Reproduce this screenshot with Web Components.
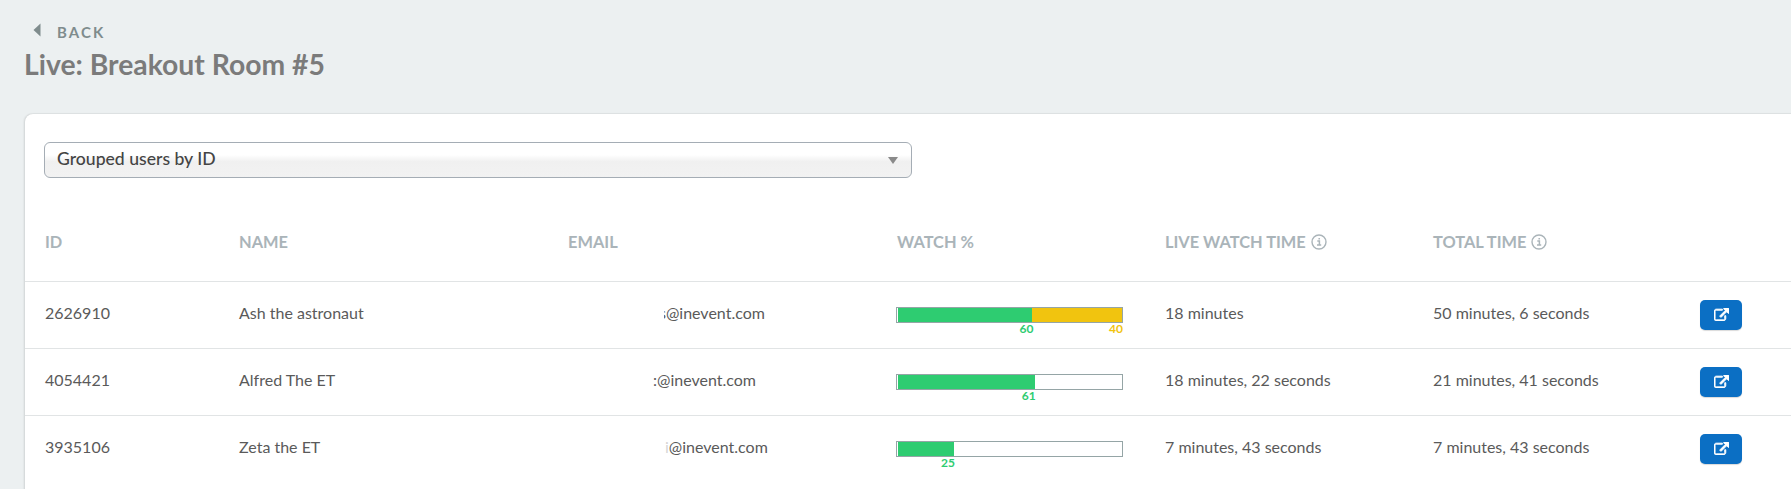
<!DOCTYPE html>
<html>
<head>
<meta charset="utf-8">
<title>Live: Breakout Room #5</title>
<style>
  html, body { margin: 0; height: 100%; overflow: hidden; }
  body { background: #ecf0f1; font-family: Lato, sans-serif; }
</style>
</head>
<body>
<report-page>
  <page-header slot="header" title="Live: Breakout Room #5"></page-header>
  <report-card>
    <group-select label="Grouped users by ID"></group-select>
    <watch-table>
      <watch-row uid="2626910" name="Ash the astronaut" first="s" domain="@inevent.com" mail-x="91" veil="5px" veil-color="#fff" live="18 minutes" total="50 minutes, 6 seconds" green="60" yellow="40"></watch-row>
      <watch-row uid="4054421" name="Alfred The ET" first=":" domain="@inevent.com" mail-x="85" veil="0" veil-color="#fff" live="18 minutes, 22 seconds" total="21 minutes, 41 seconds" green="61"></watch-row>
      <watch-row uid="3935106" name="Zeta the ET" first="i" domain="@inevent.com" mail-x="97" veil="100%" veil-color="rgba(255,255,255,.75)" live="7 minutes, 43 seconds" total="7 minutes, 43 seconds" green="25"></watch-row>
    </watch-table>
  </report-card>
</report-page>

<script>
class ReportPage extends HTMLElement {
  constructor() {
    super();
    this._shadowRoot = this.attachShadow({ mode: "open" });
    this._shadowRoot.innerHTML = `
      <style>
        :host { display: block; padding: 0 0 0 25px; }
      </style>
      <slot name="header"></slot>
      <slot></slot>
    `;
  }
}

class PageHeader extends HTMLElement {
  constructor() {
    super();
    this._shadowRoot = this.attachShadow({ mode: "open" });
  }
  connectedCallback() {
    this._shadowRoot.innerHTML = `
      <style>
        :host { display: block; padding-top: 22px; height: 92px; }
        .back {
          display: flex; align-items: center; gap: 16px; padding-left: 8px; height: 20px;
          color: #7f8c8d; font-size: 15px; font-weight: 700; letter-spacing: 2.1px;
        }
        svg { display: block; margin-top: -5px; }
        h1 { margin: 6px 0 0 -1px; color: #7b7b7b; font-size: 28.3px; line-height: 32px; font-weight: 700; }
      </style>
      <div class="back">
        <svg width="8" height="14" viewBox="0 0 8 14"><path d="M7.5 0.5v13L0.5 7z" fill="#7f8c8d"/></svg>
        <span>BACK</span>
      </div>
      <h1>${this.getAttribute("title")}</h1>
    `;
  }
}

class ReportCard extends HTMLElement {
  constructor() {
    super();
    this._shadowRoot = this.attachShadow({ mode: "open" });
    this._shadowRoot.innerHTML = `
      <style>
        :host {
          display: block; background: #fff; height: 500px;
          margin-right: -20px; padding-top: 28px;
          border-radius: 8px 0 0 0;
          box-shadow: -1px 0 2px rgba(0,0,0,.12), 0 -1px 1px rgba(0,0,0,.03);
        }
      </style>
      <slot></slot>
    `;
  }
}

class GroupSelect extends HTMLElement {
  constructor() {
    super();
    this._shadowRoot = this.attachShadow({ mode: "open" });
  }
  connectedCallback() {
    this._shadowRoot.innerHTML = `
      <style>
        :host {
          display: flex; align-items: center; justify-content: space-between;
          box-sizing: border-box; width: 868px; height: 36px; margin-left: 19px;
          padding: 0 12px 3px;
          border: 1px solid #a5adb5; border-radius: 6px;
          background: linear-gradient(#fff 0, #fff 35%, #f0f0f0 55%, #f2f2f2 100%);
          color: #444; font-size: 17.6px; font-weight: 500;
        }
        i { width: 0; height: 0; border: 5px solid transparent; border-top: 7px solid #8a8a8a; border-bottom: 0; margin: 3px 1px 0 0; }
      </style>
      <span>${this.getAttribute("label")}</span><i></i>
    `;
  }
}

const COLS = "194px 329px 329px 268px 268px 267px 60px";

class WatchTable extends HTMLElement {
  constructor() {
    super();
    this._shadowRoot = this.attachShadow({ mode: "open" });
    const info = `<svg width="16" height="16" viewBox="0 0 16 16" fill="none"><circle cx="8" cy="8" r="7" stroke="#aab4b9" stroke-width="1.4"/><path d="M6.3 6.9h2.1v3.9M6 11h4.2M8.2 3.9v1.6" stroke="#aab4b9" stroke-width="1.5"/></svg>`;
    this._shadowRoot.innerHTML = `
      <style>
        :host { display: block; margin-top: 36px; }
        .head {
          display: grid; grid-template-columns: ${COLS}; align-items: center;
          padding-left: 20px; height: 55px; padding-bottom: 12px;
          color: #aab4b9; font-size: 16.4px; font-weight: 700;
        }
        .head span { display: flex; align-items: center; gap: 5px; }
      </style>
      <div class="head">
        <span>ID</span><span>NAME</span><span>EMAIL</span><span>WATCH %</span>
        <span>LIVE WATCH TIME ${info}</span>
        <span>TOTAL TIME ${info}</span>
      </div>
      <slot></slot>
    `;
  }
}

class WatchBar extends HTMLElement {
  constructor() {
    super();
    this._shadowRoot = this.attachShadow({ mode: "open" });
  }
  connectedCallback() {
    const green = +this.getAttribute("green");
    const yellow = +this.getAttribute("yellow") || 0;
    const seg = (n, cls) => n ? `<div class="seg ${cls}" style="width:${n}%"><b>${n}</b></div>` : "";
    this._shadowRoot.innerHTML = `
      <style>
        :host { display: block; width: 227px; }
        .track {
          display: flex; box-sizing: border-box; height: 16px;
          border: 1px solid #95a5a6; background: #fff;
          padding-left: 1px;
        }
        .seg { position: relative; height: 100%; }
        .green { background: #2ecc71; color: #2ecc71; }
        .yellow { background: #f1c40f; color: #f1c40f; }
        b { position: absolute; right: -1px; top: 14px; font-size: 12px; line-height: 14px; font-weight: 700; }
      </style>
      <div class="track">${seg(green, "green")}${seg(yellow, "yellow")}</div>
    `;
  }
}

class OpenButton extends HTMLElement {
  constructor() {
    super();
    this._shadowRoot = this.attachShadow({ mode: "open" });
    this._shadowRoot.innerHTML = `
      <style>
        :host {
          display: flex; align-items: center; justify-content: center;
          width: 42px; height: 30px; border-radius: 5px;
          background: #0b6fc4; box-shadow: 0 1px 1px rgba(0,0,0,.15);
        }
      </style>
      <svg width="15" height="13" viewBox="0 0 1792 1536">
        <path fill="#fff" stroke="#fff" stroke-width="110" d="M1408 928v320q0 119-84.5 203.5T1120 1536H288q-119 0-203.5-84.5T0 1248V416q0-119 84.5-203.5T288 128h704q14 0 23 9t9 23v64q0 14-9 23t-23 9H288q-66 0-113 47t-47 113v832q0 66 47 113t113 47h832q66 0 113-47t47-113V928q0-14 9-23t23-9h64q14 0 23 9t9 23zm384-864v512q0 26-19 45t-45 19-45-19l-176-176-652 652q-10 10-23 10t-23-10L695 983q-10-10-10-23t10-23l652-652-176-176q-19-19-19-45t19-45 45-19h512q26 0 45 19t19 45z"/>
      </svg>
    `;
  }
}

class WatchRow extends HTMLElement {
  constructor() {
    super();
    this._shadowRoot = this.attachShadow({ mode: "open" });
  }
  connectedCallback() {
    const attr = (n) => this.getAttribute(n);
    const yellow = attr("yellow") ? `yellow="${attr("yellow")}"` : "";
    this._shadowRoot.innerHTML = `
      <style>
        :host {
          display: grid; grid-template-columns: ${COLS}; align-items: center;
          box-sizing: border-box; height: 67px; padding: 0 0 6px 20px;
          border-top: 1px solid #e1e4e5;
          color: #5a5a5a; font-size: 16px;
        }
        .mail { padding-left: ${attr("mail-x")}px; }
        .first { position: relative; }
        /* the start of the address is blurred out in the original */
        .first::before {
          content: ""; position: absolute; left: 0; top: 0; bottom: 0;
          width: ${attr("veil")}; background: ${attr("veil-color")};
        }
        watch-bar { margin: 5px 0 0 -1px; }
        open-button { margin-top: 5px; }
      </style>
      <span>${attr("uid")}</span>
      <span>${attr("name")}</span>
      <span class="mail"><span class="first">${attr("first")}</span>${attr("domain")}</span>
      <watch-bar green="${attr("green")}" ${yellow}></watch-bar>
      <span>${attr("live")}</span>
      <span>${attr("total")}</span>
      <open-button></open-button>
    `;
  }
}

customElements.define("report-page", ReportPage);
customElements.define("page-header", PageHeader);
customElements.define("report-card", ReportCard);
customElements.define("group-select", GroupSelect);
customElements.define("watch-table", WatchTable);
customElements.define("watch-bar", WatchBar);
customElements.define("open-button", OpenButton);
customElements.define("watch-row", WatchRow);
</script>
</body>
</html>
